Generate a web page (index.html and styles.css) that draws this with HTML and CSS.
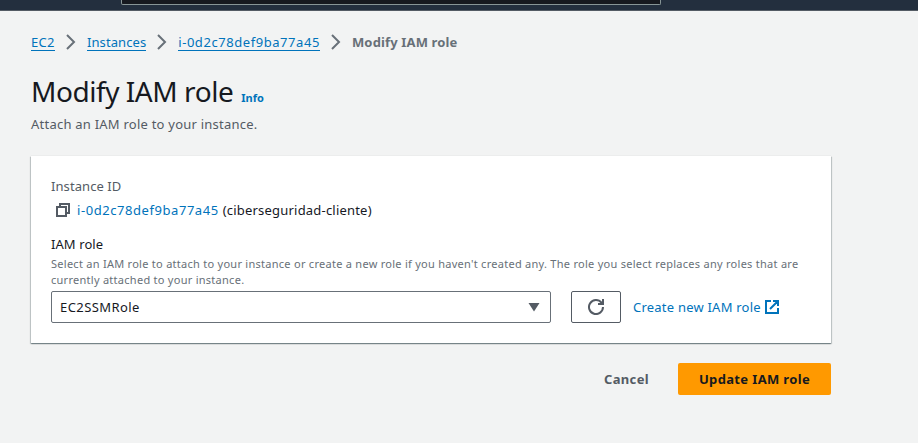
FILE: index.html
```html
<!DOCTYPE html>
<html lang="en">
<head>
<meta charset="utf-8">
<title>Modify IAM role</title>
<link rel="stylesheet" href="styles.css">
</head>
<body>
<header class="topbar"><div class="search"></div></header>
<main class="page">
  <nav class="crumbs">
    <a class="crumb first">EC2</a>
    <svg class="chev" viewBox="0 0 16 16"><path d="M4 1l7 7-7 7"/></svg>
    <a class="crumb">Instances</a>
    <svg class="chev" viewBox="0 0 16 16"><path d="M4 1l7 7-7 7"/></svg>
    <a class="crumb id">i-0d2c78def9ba77a45</a>
    <svg class="chev" viewBox="0 0 16 16"><path d="M4 1l7 7-7 7"/></svg>
    <span class="current">Modify IAM role</span>
  </nav>
  <div class="heading"><h1>Modify IAM role</h1><a class="info">Info</a></div>
  <p class="lead">Attach an IAM role to your instance.</p>
  <section class="card">
    <div class="label muted">Instance ID</div>
    <div class="instance">
      <svg class="copy" viewBox="0 0 16 16"><path d="M2 5h9v9H2zM5 5V2h9v9h-3"/></svg>
      <a class="id">i-0d2c78def9ba77a45</a><span class="name">(ciberseguridad-cliente)</span>
    </div>
    <div class="label">IAM role</div>
    <p class="hint">Select an IAM role to attach to your instance or create a new role if you haven't created any. The role you select replaces any roles that are currently attached to your instance.</p>
    <div class="controls">
      <div class="select"><span>EC2SSMRole</span><svg class="caret" viewBox="0 0 12 10"><path d="M0.5 1h11L6 9.500z"/></svg></div>
      <button class="refresh"><svg viewBox="0 0 16 16"><path d="M10 5h5V0M15 8a7 7 0 1 1-1.500-4.300L15 5"/></svg></button>
      <a class="create">Create new IAM role<svg viewBox="0 0 16 16"><path d="M14 9v5H2V2h5M9 2h5v5M6 10l8-8"/></svg></a>
    </div>
  </section>
  <div class="actions"><button class="cancel">Cancel</button><button class="primary">Update IAM role</button></div>
</main>
</body>
</html>
```
FILE: styles.css
```css
* { box-sizing: border-box; }
body {
  margin: 0;
  height: 443px;
  overflow: hidden;
  background: #f2f3f3;
  color: #16191f;
  font: 13px/20px "Noto Sans", sans-serif;
  letter-spacing: 0.08px;
}
h1, p { margin: 0; font-weight: 400; }
a { color: #0073bb; }
svg { fill: none; stroke: currentColor; stroke-width: 2; flex: none; }
button { font: inherit; padding: 0; }
.topbar { height: 11px; background: #232f3e; border-bottom: 1px solid #545b64; padding-left: 121px; }
.search { width: 540px; height: 5px; border: 1px solid #879596; border-top: 0; border-radius: 0 0 2px 2px; background: #16191f; }
.page { width: 801px; margin-left: 30px; padding-top: 21px; }
.crumbs { display: flex; align-items: center; height: 20px; padding-left: 1px; }
.crumb { height: 18px; line-height: 19px; border-bottom: 1px solid; white-space: nowrap; }
.first { width: 24px; letter-spacing: 0.3px; }
.id { letter-spacing: 0.56px; }
.chev { width: 16px; height: 16px; margin: 0 8px; color: #687078; }
.current { color: #687078; font-weight: 700; letter-spacing: 0.15px; }
.heading { display: flex; align-items: baseline; gap: 8px; height: 40px; margin-top: 19px; padding-left: 1px; }
h1 { font-size: 28px; line-height: 40px; letter-spacing: -0.45px; }
.info { font-size: 11px; font-weight: 700; letter-spacing: 0; }
.lead { margin-top: 3px; padding-left: 1px; color: #545b64; letter-spacing: 0.23px; }
.card { margin: 22px 0 0 1px; height: 187px; padding: 20px 20px 0; background: #fff; box-shadow: 0 1px 1px #001c244d, 1px 1px 1px #001c2426, -1px 1px 1px #001c2426, 0 0 1px #001c2426; }
.label { height: 20px; }
.muted { color: #545b64; }
.instance { display: flex; align-items: center; margin: 4px 0 14px 4px; height: 20px; }
.copy { width: 16px; height: 16px; margin-right: 6px; color: #545b64; }
.name { margin-left: 4px; letter-spacing: 0.2px; }
.hint { width: 755px; color: #687078; font-size: 11px; line-height: 16px; margin-top: 2px; letter-spacing: 0.27px; }
.controls { display: flex; align-items: center; margin-top: 3px; }
.select { width: 500px; height: 32px; border: 1px solid #687078; border-radius: 2px; display: flex; align-items: center; justify-content: space-between; padding: 0 10px 0 8px; letter-spacing: 0.42px; }
.caret { width: 12px; height: 10px; fill: #545b64; stroke: none; }
.refresh { width: 50px; height: 32px; margin: 0 12px 0 20px; border: 1px solid #545b64; border-radius: 2px; background: #fff; color: #545b64; display: grid; place-items: center; }
.refresh svg { width: 16px; height: 16px; }
.create { display: flex; align-items: center; gap: 3px; letter-spacing: 0.22px; }
.create svg { width: 16px; height: 16px; }
.actions { display: flex; justify-content: flex-end; align-items: center; margin-top: 20px; }
.cancel { border: 0; background: none; color: #545b64; font-weight: 700; margin-right: 29px; letter-spacing: 0.35px; }
.primary { width: 153px; height: 32px; border: 0; border-radius: 2px; background: #ff9900; color: #16191f; font-weight: 700; letter-spacing: 0.36px; }
```
